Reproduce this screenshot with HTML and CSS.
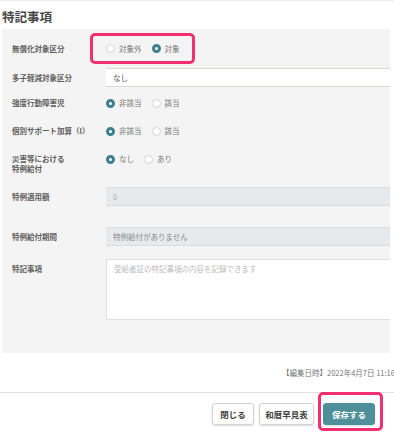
FILE: index.html
```html
<!DOCTYPE html>
<html lang="ja">
<head>
    <meta charset="UTF-8">
    <meta name="viewport" content="width=device-width, initial-scale=1.0">
    <title>特記事項</title>
    <link rel="stylesheet" href="styles.css">
</head>
<body>

<div class="page">
    <h2 class="section-title">特記事項</h2>

    <div class="panel">
        <div class="row row-free">
            <div class="label">無償化対象区分</div>
            <div class="radios">
                <label class="radio"><span class="dot"></span>対象外</label>
                <label class="radio"><span class="dot on"></span>対象</label>
            </div>
        </div>
        <div class="row row-multi">
            <div class="label">多子軽減対象区分</div>
            <div class="select">なし</div>
        </div>
        <div class="row row-behavior">
            <div class="label">強度行動障害児</div>
            <div class="radios">
                <label class="radio"><span class="dot on"></span>非該当</label>
                <label class="radio"><span class="dot"></span>該当</label>
            </div>
        </div>
        <div class="row row-support">
            <div class="label">個別サポート加算（I）</div>
            <div class="radios">
                <label class="radio"><span class="dot on"></span>非該当</label>
                <label class="radio"><span class="dot"></span>該当</label>
            </div>
        </div>
        <div class="row row-disaster">
            <div class="label">災害等における<br>特例給付</div>
            <div class="radios">
                <label class="radio"><span class="dot on"></span>なし</label>
                <label class="radio"><span class="dot"></span>あり</label>
            </div>
        </div>
        <div class="row row-amount">
            <div class="label">特例適用額</div>
            <div class="input disabled">0</div>
        </div>
        <div class="row row-period">
            <div class="label">特例給付期間</div>
            <div class="input disabled dark">特例給付がありません</div>
        </div>
        <div class="row row-note">
            <div class="label">特記事項</div>
            <div class="textarea">受給者証の特記事項の内容を記録できます</div>
        </div>
    </div>

    <div class="edited">【編集日時】2022年4月7日 11:16</div>

    <div class="footer">
        <button class="btn btn-close">閉じる</button>
        <button class="btn btn-wareki">和暦早見表</button>
        <button class="btn btn-save">保存する</button>
    </div>

    <!-- 強調枠 -->
    <div class="mark mark-radio"></div>
    <div class="mark mark-save"></div>
</div>

</body>
</html>
```

FILE: styles.css
```css
/* 基本 */
body {
    margin: 0;
    background: #fff;
    font-family: "Noto Sans CJK JP", "Noto Sans", sans-serif;
    color: #555;
    overflow: hidden;
}
.page {
    position: relative;
    width: 402px;
    height: 437px;
    border-top: 1px solid #ebebeb;
    box-sizing: border-box;
}
.section-title {
    margin: 0;
    padding: 8px 0 0 2px;
    height: 20px;
    font-size: 12.5px;
    font-weight: 700;
    line-height: 16px;
    color: #484848;
}

/* パネル */
.panel {
    margin: 0 12px 0 2px;
    background: #f4f4f4;
    padding: 0 0 33px 10px;
}
.row {
    display: grid;
    grid-template-columns: 94px 1fr;
    align-items: center;
}
.label {
    font-size: 7.5px;
    font-weight: 700;
    line-height: 10px;
    color: #5e5e5e;
}
.row-free { height: 39px; }
.row-multi { height: 19px; }
.row-behavior { height: 32px; }
.row-support { height: 24px; }
.row-disaster {
    height: 44px;
    align-items: start;
    padding-top: 11px;
    box-sizing: border-box;
}
.row-amount { height: 19px; }
.row-period { height: 19px; margin-top: 21px; }
.row-note {
    margin-top: 13px;
    align-items: start;
}
.row-note .label { padding-top: 5px; }

/* ラジオ */
.radios {
    display: flex;
    align-items: center;
    gap: 10px;
}
.radio {
    display: flex;
    align-items: center;
    gap: 4px;
    font-size: 7.5px;
    line-height: 10px;
    color: #777;
}
.dot {
    width: 9px;
    height: 9px;
    border-radius: 50%;
    border: 1px solid #d2d2d2;
    background: #fff;
    box-sizing: border-box;
}
.dot.on {
    border: 3px solid #3d7f8b;
}

/* 入力欄 */
.select, .input, .textarea {
    box-sizing: border-box;
    font-size: 7.5px;
    line-height: 10px;
    padding: 0 7px;
}
.select {
    height: 19px;
    display: flex;
    align-items: center;
    background: #fff;
    border-top: 1px solid #ddd8d2;
    border-bottom: 1px solid #ddd8d2;
    color: #555;
}
.input {
    height: 19px;
    display: flex;
    align-items: center;
}
.input.disabled {
    background: #e7eaed;
    border-top: 1px solid #dadde0;
    border-bottom: 1px solid #dcdcdc;
    color: #aaa;
}
.input.dark { color: #888; }
.textarea {
    height: 61px;
    background: #fff;
    border: 1px solid #e0e0e0;
    border-right: none;
    padding-top: 4px;
    color: #bbb;
}

/* 編集日時 */
.edited {
    margin-top: 15px;
    padding-left: 282px;
    font-size: 7.5px;
    line-height: 10px;
    color: #777;
    white-space: nowrap;
}

/* フッター */
.footer {
    margin-top: 14px;
    border-top: 1px solid #e4e1dc;
    padding: 10px 27px 0 0;
    display: flex;
    justify-content: flex-end;
    gap: 5px;
}
.btn {
    height: 22px;
    padding: 0;
    border: 1px solid #d4d4d4;
    border-radius: 3px;
    background: #fff;
    box-shadow: 0 1px 2px rgba(0, 0, 0, 0.15);
    font-family: inherit;
    font-size: 8.5px;
    font-weight: 700;
    color: #444;
}
.btn-close { width: 42px; }
.btn-wareki { width: 55px; }
.btn-save {
    margin-left: 4px;
    width: 52px;
    background: #4e8f99;
    border-color: #4e8f99;
    color: #fff;
}

/* 強調枠 */
.mark {
    position: absolute;
    border: 3px solid #f2306f;
    border-radius: 5px;
    box-sizing: border-box;
}
.mark-radio {
    left: 90px;
    top: 32px;
    width: 105px;
    height: 31px;
}
.mark-save {
    left: 318px;
    top: 391px;
    width: 65px;
    height: 39px;
}
```
